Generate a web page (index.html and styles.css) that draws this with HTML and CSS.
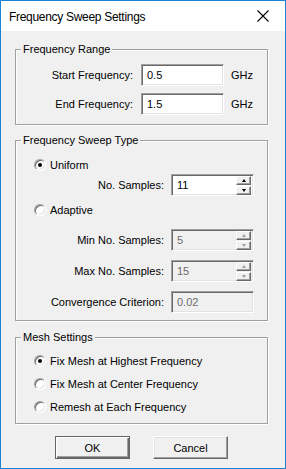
FILE: index.html
```html
<!DOCTYPE html>
<html>
<head>
  <meta charset="utf-8">
  <title>Frequency Sweep Settings</title>
  <link rel="stylesheet" href="styles.css">
</head>
<body>
<div class="Dialog">

  <div class="TitleBar">
    <span class="Title">Frequency Sweep Settings</span>
    <svg class="Close" width="12" height="12" viewBox="0 0 12 12">
      <path d="M0.5 0.5 L11.5 11.5 M11.5 0.5 L0.5 11.5" stroke="#000" stroke-width="1.1" fill="none"/>
    </svg>
  </div>

  <div class="Body">

    <div class="Group Group--range">
      <div class="GroupTitle">Frequency Range</div>
      <div class="FieldRow">
        <label class="FieldLabel">Start Frequency:</label>
        <div class="TextBox">0.5</div>
        <span class="Unit">GHz</span>
      </div>
      <div class="FieldRow">
        <label class="FieldLabel">End Frequency:</label>
        <div class="TextBox">1.5</div>
        <span class="Unit">GHz</span>
      </div>
    </div>

    <div class="Group Group--sweep">
      <div class="GroupTitle">Frequency Sweep Type</div>
      <div class="Radio Radio--uniform"><span class="RadioMark is-checked"></span>Uniform</div>
      <div class="FieldRow FieldRow--spin">
        <label class="FieldLabel">No. Samples:</label>
        <div class="TextBox">
          <span class="TextValue">11</span>
          <span class="Spin"><span class="SpinBtn"><i class="Arrow Arrow--up"></i></span><span class="SpinBtn"><i class="Arrow Arrow--down"></i></span></span>
        </div>
      </div>
      <div class="Radio Radio--adaptive"><span class="RadioMark"></span>Adaptive</div>
      <div class="AdaptiveFields">
        <div class="FieldRow">
          <label class="FieldLabel">Min No. Samples:</label>
          <div class="TextBox is-disabled">
            <span class="TextValue">5</span>
            <span class="Spin"><span class="SpinBtn"><i class="Arrow Arrow--up"></i></span><span class="SpinBtn"><i class="Arrow Arrow--down"></i></span></span>
          </div>
        </div>
        <div class="FieldRow">
          <label class="FieldLabel">Max No. Samples:</label>
          <div class="TextBox is-disabled">
            <span class="TextValue">15</span>
            <span class="Spin"><span class="SpinBtn"><i class="Arrow Arrow--up"></i></span><span class="SpinBtn"><i class="Arrow Arrow--down"></i></span></span>
          </div>
        </div>
        <div class="FieldRow">
          <label class="FieldLabel">Convergence Criterion:</label>
          <div class="TextBox is-disabled">0.02</div>
        </div>
      </div>
    </div>

    <div class="Group Group--mesh">
      <div class="GroupTitle">Mesh Settings</div>
      <div class="MeshList">
        <div class="Radio"><span class="RadioMark is-checked"></span>Fix Mesh at Highest Frequency</div>
        <div class="Radio"><span class="RadioMark"></span>Fix Mesh at Center Frequency</div>
        <div class="Radio"><span class="RadioMark"></span>Remesh at Each Frequency</div>
      </div>
    </div>

    <div class="Buttons">
      <button class="Button Button--default" type="button">OK</button>
      <button class="Button" type="button">Cancel</button>
    </div>

  </div>
</div>
</body>
</html>
```

FILE: styles.css
```css
html, body {
  margin: 0;
  padding: 0;
}
body {
  font-family: "Liberation Sans", Arial, sans-serif;
  font-size: 11px;
  color: #000;
}
.Dialog {
  box-sizing: border-box;
  width: 286px;
  height: 469px;
  border: 1px solid #1883d7;
  background-color: #f0f0f0;
  display: flex;
  flex-direction: column;
}
.TitleBar {
  height: 30px;
  background-color: #fff;
  display: flex;
  align-items: center;
  justify-content: space-between;
  padding: 0 16px 0 8px;
}
.Title {
  font-size: 12px;
  letter-spacing: -0.3px;
  margin-top: 1px;
}
.Close {
  display: block;
  margin-top: -1px;
}
.Body {
  padding-top: 18px;
}

/* group boxes */
.Group {
  box-sizing: border-box;
  width: 253px;
  margin-left: 14px;
  border: 1px solid #a0a0a0;
  box-shadow: inset 1px 1px #fff, 1px 1px #fff;
}
.GroupTitle {
  display: table;
  margin: -7px 0 0 5px;
  padding: 0 2px;
  line-height: 13px;
  background-color: #f0f0f0;
}
.Group--range {
  padding-bottom: 9px;
}
.Group--range .FieldRow {
  margin-top: 8px;
}
.Group--range .FieldRow + .FieldRow {
  margin-top: 7px;
}
.Group--sweep {
  margin-top: 15px;
  padding-bottom: 7px;
}
.Group--mesh {
  margin-top: 16px;
  padding-bottom: 10px;
}

/* rows */
.FieldRow {
  display: flex;
  align-items: center;
  height: 22px;
}
.FieldLabel {
  box-sizing: border-box;
  width: 117px;
  margin-right: 8px;
  text-align: right;
}
.Group--sweep .FieldLabel {
  width: 148px;
  margin-right: 7px;
}
.Unit {
  margin-left: 7px;
}
.TextBox {
  box-sizing: border-box;
  width: 83px;
  height: 22px;
  display: flex;
  align-items: center;
  justify-content: space-between;
  padding-left: 5px;
  background-color: #fff;
  border: 1px solid;
  border-color: #a0a0a0 #fff #fff #a0a0a0;
  box-shadow: inset 1px 1px #696969, inset -1px -1px #e3e3e3;
}
.TextBox.is-disabled {
  background-color: #f0f0f0;
  color: #6d6d6d;
}
.Spin {
  display: flex;
  flex-direction: column;
  gap: 1px;
  margin-right: 2px;
}
.SpinBtn {
  box-sizing: border-box;
  width: 15px;
  height: 9px;
  display: flex;
  align-items: center;
  justify-content: center;
  background-color: #f0f0f0;
  border: 1px solid;
  border-color: #fff #696969 #696969 #fff;
  box-shadow: inset -1px -1px #a0a0a0;
}
.Arrow {
  width: 0;
  height: 0;
  border-left: 2.5px solid transparent;
  border-right: 2.5px solid transparent;
}
.Arrow--up {
  border-bottom: 3px solid #000;
}
.Arrow--down {
  border-top: 3px solid #000;
}
.is-disabled .Arrow--up {
  border-bottom-color: #a0a0a0;
}
.is-disabled .Arrow--down {
  border-top-color: #a0a0a0;
}

/* radios */
.Radio {
  display: flex;
  align-items: center;
  height: 13px;
  padding-left: 18px;
}
.RadioMark {
  box-sizing: border-box;
  position: relative;
  width: 12px;
  height: 12px;
  margin-right: 4px;
  border-radius: 50%;
  background-color: #fff;
  border: 1px solid;
  border-color: #a0a0a0 #fff #fff #a0a0a0;
  box-shadow: inset 1px 1px #696969, inset -1px -1px #e3e3e3;
}
.RadioMark.is-checked::after {
  content: "";
  position: absolute;
  left: 3px;
  top: 3px;
  width: 4px;
  height: 4px;
  border-radius: 50%;
  background-color: #000;
}
.Radio--uniform {
  margin-top: 11px;
}
.FieldRow--spin {
  margin-top: 3px;
}
.Radio--adaptive {
  margin-top: 7px;
}
.AdaptiveFields {
  margin-top: 13px;
  display: flex;
  flex-direction: column;
  gap: 9px;
}
.MeshList {
  margin-top: 10px;
  display: flex;
  flex-direction: column;
  gap: 10px;
}

/* buttons */
.Buttons {
  display: flex;
  gap: 23px;
  margin: 12px 0 0 54px;
}
.Button {
  box-sizing: border-box;
  width: 75px;
  height: 23px;
  padding: 0;
  font: inherit;
  color: #000;
  background-color: #f0f0f0;
  border: 1px solid;
  border-color: #fff #696969 #696969 #fff;
  box-shadow: inset -1px -1px #a0a0a0, inset 1px 1px #e3e3e3;
}
.Button--default {
  border-color: #646464;
  box-shadow: inset 1px 1px #fff, inset -1px -1px #696969, inset -2px -2px #a0a0a0;
}
```
